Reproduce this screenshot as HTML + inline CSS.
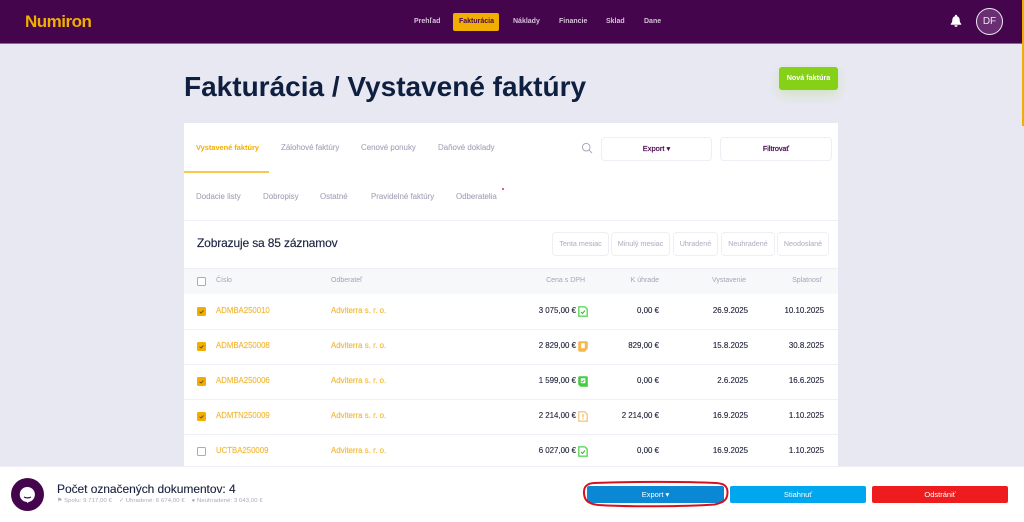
<!DOCTYPE html>
<html lang="sk"><head><meta charset="utf-8"><title>Numiron</title>
<style>
html,body{margin:0;padding:0;width:1024px;height:522px;overflow:hidden;background:#e8e8f2}
body{position:relative;font-family:"Liberation Sans",sans-serif}
.a{position:absolute;white-space:nowrap}
.t{position:absolute;white-space:nowrap;line-height:12px;height:12px}
.nav{font-size:7px;font-weight:bold;color:#d5c3d8;top:16px}
.tab{font-size:7.9px;color:#a4a4b9;-webkit-text-stroke:.1px #a4a4b9}
.fb{position:absolute;top:232px;height:22px;border:1px solid #eeeef4;border-radius:4px;background:#fff;font-size:7.2px;color:#b5b5c7;text-align:center;line-height:22px;white-space:nowrap;box-sizing:content-box;-webkit-text-stroke:.1px #b5b5c7}
.th{font-size:7px;color:#a4a4b8;top:275px}
.line{position:absolute;left:184px;width:654px;height:1px;background:#f0f0f6}
.num{font-size:7.8px;color:#f3b93a;left:216px;-webkit-text-stroke:.15px #f3b93a}
.cust{font-size:7.9px;color:#f3b93a;left:331px;-webkit-text-stroke:.15px #f3b93a}
.r{font-size:7.9px;color:#20233a;text-align:right;-webkit-text-stroke:.12px #20233a}
.cb{position:absolute;left:197px;width:9px;height:9px;border-radius:1.5px;background:#f2ae00}
.cb svg{position:absolute;left:0;top:0}
.cu{position:absolute;left:197px;width:7px;height:7px;border:1px solid #a9abc0;border-radius:1.5px;background:#fff}
.ic{position:absolute;left:578px}
.bb{position:absolute;top:486px;height:17px;border-radius:2px;color:#fff;font-size:7.5px;text-align:center;line-height:17px}
</style></head><body>

<div class="a" style="left:0;top:0;width:1022px;height:44px;background:#45054d;border-bottom:1px solid #8a6a92;box-sizing:border-box"></div>
<div class="a" style="left:1022px;top:0;width:2px;height:126px;background:#f0ae00"></div>
<div class="t" style="left:25px;top:16px;font-size:17px;line-height:12px;font-weight:bold;color:#f0ae00;letter-spacing:-.5px">Numiron</div>
<div class="t nav" style="left:414px">Prehľad</div>
<div class="a" style="left:453px;top:13px;width:46px;height:18px;background:#f2ae00;border-radius:2px"></div>
<div class="t nav" style="left:459px;color:#45054d">Fakturácia</div>
<div class="t nav" style="left:513px">Náklady</div>
<div class="t nav" style="left:559px">Financie</div>
<div class="t nav" style="left:606px">Sklad</div>
<div class="t nav" style="left:644px">Dane</div>
<svg class="a" style="left:950px;top:14px" width="12" height="13" viewBox="0 0 12 13"><path d="M6 .8c.7 0 1.100.5 1.100 1.100v.4c1.700.5 2.600 2 2.600 3.700 0 2 .5 2.900 1.500 3.800v.9H.8v-.9C1.800 8.900 2.300 8 2.300 6c0-1.700.9-3.200 2.600-3.700v-.4C4.900 1.300 5.300.8 6 .8z" fill="#fff"/><path d="M4.400 11.300h3.200a1.600 1.600 0 0 1-3.200 0z" fill="#fff"/></svg>
<div class="a" style="left:976px;top:8px;width:25px;height:25px;border:1px solid #f0eaf2;border-radius:50%;background:#6a2e72;color:#efe6f0;font-size:10px;line-height:25px;text-align:center">DF</div>

<div class="t" style="left:184px;top:81px;font-size:28px;font-weight:bold;line-height:12px;color:#0f1f3f">Fakturácia / Vystavené faktúry</div>
<div class="a" style="left:779px;top:67px;width:59px;height:23px;background:#86d118;border-radius:3px;box-shadow:0 5px 11px rgba(134,209,24,.22);color:#fff;font-size:7.200px;font-weight:bold;text-align:center;line-height:21px">Nová faktúra</div>

<div class="a" style="left:184px;top:123px;width:654px;height:345px;background:#fff"></div>

<div class="t tab" style="left:196px;top:142px;color:#f2ae00;font-weight:bold;font-size:7.400px;-webkit-text-stroke:0">Vystavené faktúry</div>
<div class="a" style="left:184px;top:171px;width:85px;height:2px;background:#f9c94e"></div>
<div class="t tab" style="left:281px;top:142px">Zálohové faktúry</div>
<div class="t tab" style="left:361px;top:142px">Cenové ponuky</div>
<div class="t tab" style="left:438px;top:142px">Daňové doklady</div>
<div class="t tab" style="left:196px;top:191px">Dodacie listy</div>
<div class="t tab" style="left:263px;top:191px">Dobropisy</div>
<div class="t tab" style="left:320px;top:191px">Ostatné</div>
<div class="t tab" style="left:371px;top:191px">Pravidelné faktúry</div>
<div class="t tab" style="left:456px;top:191px">Odberatelia</div>
<div class="a" style="left:502px;top:188px;width:2px;height:2px;border-radius:50%;background:#ee2a3a"></div>

<svg class="a" style="left:581px;top:142px" width="12" height="12" viewBox="0 0 12 12" fill="none" stroke="#a9a9bd" stroke-width="1"><circle cx="5.200" cy="5.200" r="3.800"/><path d="M8 8l3 3"/></svg>
<div class="a" style="left:601px;top:137px;width:109px;height:22px;border:1px solid #eeeef4;border-radius:4px;color:#45054d;font-size:7.500px;text-align:center;line-height:22px;-webkit-text-stroke:.2px #45054d">Export ▾</div>
<div class="a" style="left:720px;top:137px;width:110px;height:22px;border:1px solid #eeeef4;border-radius:4px;color:#45054d;font-size:7.200px;text-align:center;line-height:22px;-webkit-text-stroke:.25px #45054d">Filtrovať</div>

<div class="line" style="top:220px"></div>
<div class="t" style="left:197px;top:237px;font-size:12px;color:#1a2340;letter-spacing:-.15px;-webkit-text-stroke:.15px #1a2340">Zobrazuje sa 85 záznamov</div>
<div class="fb" style="left:552px;width:55px">Tenta mesiac</div>
<div class="fb" style="left:611px;width:57px">Minulý mesiac</div>
<div class="fb" style="left:673px;width:43px">Uhradené</div>
<div class="fb" style="left:721px;width:52px">Neuhradené</div>
<div class="fb" style="left:777px;width:50px">Neodoslané</div>

<div class="a" style="left:184px;top:268px;width:654px;height:26px;background:#f7f8fa;border-top:1px solid #eeeff4;box-sizing:border-box"></div>
<div class="cu" style="top:277px"></div>
<div class="t th" style="left:216px">Číslo</div>
<div class="t th" style="left:331px">Odberateľ</div>
<div class="t th" style="left:485px;width:100px;text-align:right">Cena s DPH</div>
<div class="t th" style="left:559px;width:100px;text-align:right">K úhrade</div>
<div class="t th" style="left:646px;width:100px;text-align:right">Vystavenie</div>
<div class="t th" style="left:722px;width:100px;text-align:right">Splatnosť</div>

<div class="line" style="top:329px"></div>
<div class="line" style="top:364px"></div>
<div class="line" style="top:399px"></div>
<div class="line" style="top:434px"></div>

<!-- row 1 -->
<div class="cb" style="top:307px"><svg width="9" height="9" viewBox="0 0 9 9" fill="none" stroke="#6b4a10" stroke-width=".9"><path d="M2.500 4.700l1.500 1.300L6.500 3.500"/></svg></div>
<div class="t num" style="top:305px">ADMBA250010</div>
<div class="t cust" style="top:305px">Adviterra s. r. o.</div>
<div class="t r" style="top:305px;left:476px;width:100px">3 075,00 €</div>
<svg class="ic" style="top:306px" width="10" height="11" viewBox="0 0 10 11"><path d="M.8.800h6l2.400 2.400v7H.8z" fill="#fff" stroke="#5ed65e" stroke-width="1.400"/><path d="M3 6l1.500 1.500L7 4.500" fill="none" stroke="#35b335" stroke-width="1"/></svg>
<div class="t r" style="top:305px;left:559px;width:100px">0,00 €</div>
<div class="t r" style="top:305px;left:648px;width:100px">26.9.2025</div>
<div class="t r" style="top:305px;left:724px;width:100px">10.10.2025</div>

<!-- row 2 -->
<div class="cb" style="top:342px"><svg width="9" height="9" viewBox="0 0 9 9" fill="none" stroke="#6b4a10" stroke-width=".9"><path d="M2.500 4.700l1.500 1.300L6.500 3.500"/></svg></div>
<div class="t num" style="top:340px">ADMBA250008</div>
<div class="t cust" style="top:340px">Adviterra s. r. o.</div>
<div class="t r" style="top:340px;left:476px;width:100px">2 829,00 €</div>
<svg class="ic" style="top:341px" width="10" height="11" viewBox="0 0 10 11"><path d="M1.500.2h7q1.300 0 1.300 1.300v6L7 10.800H2.500Q.2 10.800.2 9V1.500Q.2.200 1.500.2z" fill="#f5b64c"/><rect x="3.200" y="2.200" width="3.600" height="5" rx=".5" fill="#fff"/></svg>
<div class="t r" style="top:340px;left:559px;width:100px">829,00 €</div>
<div class="t r" style="top:340px;left:648px;width:100px">15.8.2025</div>
<div class="t r" style="top:340px;left:724px;width:100px">30.8.2025</div>

<!-- row 3 -->
<div class="cb" style="top:377px"><svg width="9" height="9" viewBox="0 0 9 9" fill="none" stroke="#6b4a10" stroke-width=".9"><path d="M2.500 4.700l1.500 1.300L6.500 3.500"/></svg></div>
<div class="t num" style="top:375px">ADMBA250006</div>
<div class="t cust" style="top:375px">Adviterra s. r. o.</div>
<div class="t r" style="top:375px;left:476px;width:100px">1 599,00 €</div>
<svg class="ic" style="top:376px" width="10" height="11" viewBox="0 0 10 11"><path d="M1.500.2h7q1.300 0 1.300 1.300v9.300H2.500L.2 8.800V1.500Q.2.200 1.500.2z" fill="#45cc45"/><rect x="2.800" y="2.200" width="4.600" height="5" rx=".5" fill="#fff"/><path d="M3.500 5l1 1 1.800-2" fill="none" stroke="#35b335" stroke-width=".8"/></svg>
<div class="t r" style="top:375px;left:559px;width:100px">0,00 €</div>
<div class="t r" style="top:375px;left:648px;width:100px">2.6.2025</div>
<div class="t r" style="top:375px;left:724px;width:100px">16.6.2025</div>

<!-- row 4 -->
<div class="cb" style="top:412px"><svg width="9" height="9" viewBox="0 0 9 9" fill="none" stroke="#6b4a10" stroke-width=".9"><path d="M2.500 4.700l1.500 1.300L6.500 3.500"/></svg></div>
<div class="t num" style="top:410px">ADMTN250009</div>
<div class="t cust" style="top:410px">Adviterra s. r. o.</div>
<div class="t r" style="top:410px;left:476px;width:100px">2 214,00 €</div>
<svg class="ic" style="top:411px" width="10" height="11" viewBox="0 0 10 11"><path d="M.8.800h6l2.400 2.400v7H.8z" fill="#fff" stroke="#f3c888" stroke-width="1.400"/><rect x="4.400" y="3" width="1.200" height="3.200" fill="#f0b860"/><rect x="4.400" y="7" width="1.200" height="1.200" fill="#f0b860"/></svg>
<div class="t r" style="top:410px;left:559px;width:100px">2 214,00 €</div>
<div class="t r" style="top:410px;left:648px;width:100px">16.9.2025</div>
<div class="t r" style="top:410px;left:724px;width:100px">1.10.2025</div>

<!-- row 5 -->
<div class="cu" style="top:447px"></div>
<div class="t num" style="top:445px">UCTBA250009</div>
<div class="t cust" style="top:445px">Adviterra s. r. o.</div>
<div class="t r" style="top:445px;left:476px;width:100px">6 027,00 €</div>
<svg class="ic" style="top:446px" width="10" height="11" viewBox="0 0 10 11"><path d="M.8.800h6l2.400 2.400v7H.8z" fill="#fff" stroke="#5ed65e" stroke-width="1.400"/><path d="M3 6l1.500 1.500L7 4.500" fill="none" stroke="#35b335" stroke-width="1"/></svg>
<div class="t r" style="top:445px;left:559px;width:100px">0,00 €</div>
<div class="t r" style="top:445px;left:648px;width:100px">16.9.2025</div>
<div class="t r" style="top:445px;left:724px;width:100px">1.10.2025</div>

<!-- bottom bar -->
<div class="a" style="left:0;top:466px;width:1024px;height:56px;background:#fff;border-top:1px solid #eeeef4;box-sizing:border-box"></div>
<svg class="a" style="left:11px;top:478px" width="33" height="33" viewBox="0 0 33 33"><circle cx="16.500" cy="16.500" r="16.500" fill="#45054d"/><path d="M16.500 9a7.500 7.500 0 0 1 2 14.700l-2.500 1.300v-1a7.500 7.500 0 0 1 .5-15z" fill="#fff"/><path d="M13 19q3.500 1.800 7 0" stroke="#45054d" stroke-width="1.200" fill="none"/></svg>
<div class="t" style="left:57px;top:483px;font-size:12px;color:#1a2340;letter-spacing:-.05px;-webkit-text-stroke:.12px #1a2340">Počet označených dokumentov: 4</div>
<div class="t" style="left:57px;top:495px;font-size:5.900px;color:#a6a8bc;letter-spacing:.1px">⚑ Spolu: 9 717,00 € &nbsp;&nbsp;&nbsp;✓ Uhradené: 6 674,00 € &nbsp;&nbsp;&nbsp;● Neuhradené: 3 043,00 €</div>

<div class="bb" style="left:587px;width:137px;background:#0a88d4">Export ▾</div>
<div class="bb" style="left:730px;width:136px;background:#00a7ee">Stiahnuť</div>
<div class="bb" style="left:872px;width:136px;background:#ee1c1e">Odstrániť</div>
<svg class="a" style="left:580px;top:478px" width="152" height="32" viewBox="0 0 152 32" fill="none" stroke="#d8101c" stroke-width="2"><path d="M14 5C55 3.500 105 3.500 136 5c8 .5 11.500 3 11.500 9.500 0 7-3.500 10-13 12-30 2-85 2.500-116 .5C9 26 4.500 23 4 15.500 3.500 8.500 7 5.500 14 5z"/></svg>
</body></html>
